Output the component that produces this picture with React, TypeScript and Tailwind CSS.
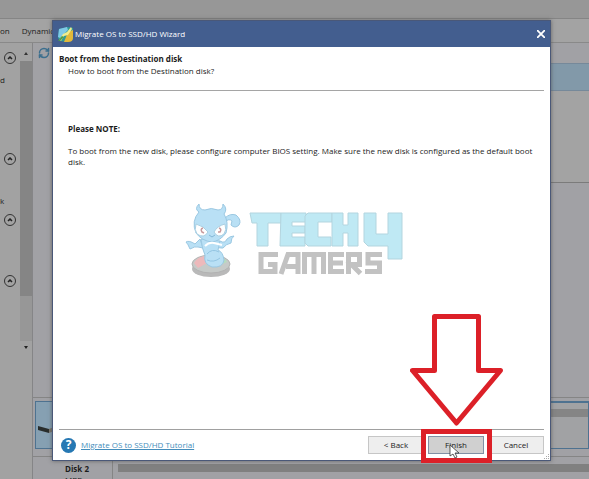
import { RefreshCw } from "lucide-react";

const sections = [
  { height: "h-[101px]", text: "d", gap: "mt-[10px]" },
  { height: "h-[61px]", text: "k", gap: "mt-[30px]" },
  { height: "h-[61px]", text: "", gap: "" },
  { height: "h-[61px]", text: "", gap: "" },
];

function AppIcon() {
  return (
    <svg viewBox="0 0 18 18" className="h-[18px] w-[18px] shrink-0">
      <path d="M3 4 12 2l5 1v11l-6 3-7-1-2-3z" fill="#2f9a94" />
      <path d="M3 4l8-2 1 3-8 8-2-1z" fill="#7fc9e6" />
      <path d="M12 7l5-2v8q0 4-5 4H8l2-5z" fill="#e3b93a" />
      <path d="M3 15l4-6 4-2 4-5 1 2-4 6-4 1-3 5z" fill="#f1ec8e" />
      <path d="M2 16l4-5 2 1-4 4z" fill="#4d9b4c" />
    </svg>
  );
}

function Mascot() {
  return (
    <svg viewBox="0 0 58 76" className="h-[76px] w-[58px]" strokeLinejoin="round">
      <ellipse cx="26" cy="66" rx="19" ry="8" fill="#b9b9b9" />
      <ellipse cx="26" cy="61" rx="19" ry="9" fill="#c6cac8" stroke="#b2b2b2" />
      <path d="M9 60q4-7 12-7l1 7-9 5z" fill="#edb9bb" />
      <path d="M31 53q9 1 11 6l-7 3z" fill="#b5dcbf" />
      <g fill="#b9e0f5" stroke="#9bc8e2">
        <path d="M40 15q5-5 11-3 6 5 3 10-4 4-8 0l1-4q-3-3-7 1z" />
        <path d="M15 36 10 41q-6-4-9-2 2 2 4 7 5-3 8-2l5 1zM35 38q5 3 7-2 3-3 7-3-3 2-3 7-5 1-8 5-5 1-9-3z" />
        <path d="M16 36q1 10 4 16-2 9 7 12 11 1 12-7-1-8-6-10l2-9z" />
        <path d="M14 9Q9 6 14 1q0 6 6 6 6-3 13 0 5 0 5-6 5 5 1 10 5 8 2 19-6 8-14 9-10-1-16-9-5-12 3-21z" />
      </g>
      <path d="M11 21q8 2 12 8-4 7-11 2-3-4-1-10zM40 21q-8 2-11 8 4 7 10 2 3-4 1-10z" fill="#fff" stroke="#a9cfe2" />
      <g fill="none" stroke="#c99a9d" strokeWidth="1.5">
        <path d="M18 25q-3 1-1 4l2 1M34 25q3 1 1 4h-2" />
      </g>
      <path d="M24 32l3 2 3-2" fill="none" stroke="#83b7d6" />
      <path d="M20 43q4-4 9-3l8 2" fill="none" stroke="#fff" strokeWidth="2" />
      <path d="M22 51q5-6 12-2M22 57q7 3 13-2" fill="none" stroke="#93c5e2" />
    </svg>
  );
}

function Watermark() {
  return (
    <div role="img" aria-label="Tech 4 Gamers" className="flex items-start gap-1.5">
      <Mascot />
      {/* stencil style wordmark */}
      <svg viewBox="0 0 154 68" className="mt-2 h-[68px] w-[154px]">
        <g fill="#bfe9f4" stroke="#b3d5df" strokeWidth="1">
          <path d="M1 2h31v10H19v23H8V12H3z" />
          <path d="M32 2h25v9H43v4h13v7H43v4h13v9H31z" />
          <path d="M59 2h24v9H69v15h13v9H59l-3-3V5z" />
          <path d="M83 2h11v12h5V2h10v33H99V22h-5v13H83z" />
          <path d="M115 2h12v21h12V2h14v46h-14V35h-20l-4-4z" />
        </g>
        <g fill="none" stroke="#c2c2c2" strokeWidth="5">
          <path d="M29 43.500H12v17h14v-7h-7" />
          <path d="M32 63l7-19.500h10V63M37 55.500h12" />
          <path d="M55.500 63V43.500h19V63M65 43.500V63" />
          <path d="M95 43.500H81.500v17H95M81 52h13" />
          <path d="M99.500 63V43.500h11v10h-8l9 9" />
          <path d="M133 43.500h-14v8.500h11.500v8.500H116" />
        </g>
      </svg>
    </div>
  );
}

function Sidebar() {
  return (
    <aside className="flex w-[33px] shrink-0 border-r border-[#858587] bg-[#a2a2a2]">
      <div className="w-5 pt-[9px]">
        {sections.map(({ height, text, gap }, i) => (
          <section key={i} className={height}>
            <button aria-label="Collapse section" className="ml-1 flex h-3 w-3 items-center justify-center rounded-full border border-[#333]">
              <svg viewBox="0 0 6 4" className="h-1 w-1.5" fill="none" stroke="#222" strokeWidth="1.5"><path d="M1 3l2-2 2 2" /></svg>
            </button>
            {text && <p className={`${gap} leading-3`}>{text}</p>}
          </section>
        ))}
      </div>
      <div className="flex h-[312px] w-3 flex-col items-center">
        <svg viewBox="0 0 6 4" className="mt-2 h-1 w-1.5 shrink-0"><path d="M1 4l2-3 2 3z" fill="#333" /></svg>
        <div className="mt-[6px] h-[235px] w-full bg-[#858585]" />
        <div className="h-[45px] w-full bg-[#979797]" />
        <svg viewBox="0 0 6 4" className="mt-[5px] h-1 w-1.5 shrink-0"><path d="M1 0l2 3 2-3z" fill="#222" /></svg>
      </div>
    </aside>
  );
}

function Background() {
  return (
    <div className="flex min-h-screen flex-col">
      <div className="h-[19px] border-b border-[#858585] bg-[#979797]" />
      <nav className="flex h-6 items-center gap-3 border-b border-[#898989] bg-[#a3a3a3]">
        <span>on</span>
        <span>Dynamic</span>
      </nav>
      <div className="flex flex-1">
        <Sidebar />
        <main className="flex min-w-0 flex-1 flex-col bg-[#a1a1a5]">
          <div className="h-5 pt-1 pl-[5px]">
            <RefreshCw size={12} strokeWidth={3} className="text-[#3c6f8e]" />
          </div>
          <div className="ml-6 h-7 border-y border-[#76899a] bg-[#8299a9]" />
          <div className="ml-6 h-[92px] border-b border-[#7b7b7b] bg-[#a3a3a3]" />
          <div className="h-[215px] border-b border-[#858585]" />
          <div className="mt-[3px] ml-0.5 flex h-12 border border-[#4e7290] bg-[#a1a2a4]">
            <div className="w-[76px] bg-[#86a0b2] pt-6 pl-0.5">
              <svg viewBox="0 0 16 8" className="h-2 w-4"><path d="M0 0l11 3v4L0 4z" fill="#292d2c" /><path d="M11 3l5-2v4l-5 2z" fill="#77736a" /></svg>
            </div>
            <div className="flex-1 border-t border-[#4e7290] pt-1.5"><div className="h-2 bg-[#858585]" /></div>
          </div>
          <div className="mt-[7px] flex flex-1 border-t border-[#858585]">
            <div className="w-20 border-r border-[#858585] pt-1.5 pl-8 leading-[11px]">
              <p className="font-bold">Disk 2</p>
              <p>MBR</p>
            </div>
            <div className="flex-1 pt-[7px] pl-[5px]"><div className="h-2 bg-[#808080]" /></div>
          </div>
        </main>
      </div>
    </div>
  );
}

const button = "h-[18px] w-14 border border-[#c6c6c6] bg-[#eeeeee] leading-3";

export default function App() {
  return (
    <div className="relative h-screen overflow-hidden bg-[#a3a3a3] font-['Open_Sans',sans-serif] text-[8px] text-[#1c1c1c]">
      <Background />
      <div role="dialog" aria-labelledby="wizard-title" className="absolute top-5 right-[38px] bottom-[18px] left-[52px] flex flex-col border border-[#4a5878] bg-white shadow-[0_0_4px_#444a]">
        <header className="flex h-[26px] shrink-0 items-center bg-[#435e8f] pr-[3px] pl-[3px] text-white">
          <AppIcon />
          <h1 id="wizard-title" className="ml-[1px] flex-1 leading-3">Migrate OS to SSD/HD Wizard</h1>
          <button aria-label="Close" className="flex h-3 w-3 items-center justify-center">
            <svg viewBox="0 0 8 8" className="h-2 w-2" stroke="currentColor" strokeWidth="1.8"><path d="M0 0l8 8M8 0L0 8" /></svg>
          </button>
        </header>

        <div className="mx-1.5 flex h-11 shrink-0 flex-col border-b border-[#a5a5a5] pt-1.5">
          <h2 className="leading-3 font-bold">Boot from the Destination disk</h2>
          <p className="pl-[9px] leading-3">How to boot from the Destination disk?</p>
        </div>

        <div className="flex-1 px-[15px] pt-8">
          <h3 className="leading-3 font-bold">Please NOTE:</h3>
          <p className="mt-[10px] leading-[11px]">
            To boot from the new disk, please configure computer BIOS setting. Make sure the new disk is configured as the default boot disk.
          </p>
          <div className="mt-9 flex justify-center pr-4">
            <Watermark />
          </div>
        </div>

        <footer className="relative mx-1.5 flex h-[31px] shrink-0 items-center border-t border-[#a0a0a0]">
          <span className="ml-0.5 flex h-[15px] w-[15px] items-center justify-center rounded-full bg-[#2678b3] text-[12px] leading-3 font-bold text-white">?</span>
          <a href="#tutorial" className="ml-[5px] text-[#448dbb] underline">Migrate OS to SSD/HD Tutorial</a>
          <div className="ml-auto flex gap-1">
            <button className={button}>&lt; Back</button>
            <button className="h-[18px] w-14 border border-[#8190a4] bg-[#d0d0d0] leading-3">Finish</button>
            <button className={button}>Cancel</button>
          </div>
          <svg viewBox="0 0 6 6" className="absolute -right-1.5 bottom-0 h-1.5 w-1.5" fill="#aaa"><path d="M4 0h1v1H4zM2 2h1v1H2zM4 2h1v1H4zM0 4h1v1H0zM2 4h1v1H2zM4 4h1v1H4z" /></svg>
        </footer>
      </div>

      {/* arrow, frame and pointer over the Finish button */}
      <svg viewBox="0 0 96 150" className="absolute right-[83px] bottom-[15px] h-[150px] w-24">
        <path d="M24.500 2.500h44v54H90.500L46.500 109 2.500 56.500h22z" fill="none" stroke="#dc2028" strokeWidth="5" strokeLinejoin="round" />
        <path d="M13.500 117.500h66v29h-66z" fill="none" stroke="#dc2028" strokeWidth="5" />
        <path d="M40 131v11l3-2 2 4 2-1-2-4h4z" fill="white" stroke="#333" strokeWidth="0.800" />
      </svg>
    </div>
  );
}
